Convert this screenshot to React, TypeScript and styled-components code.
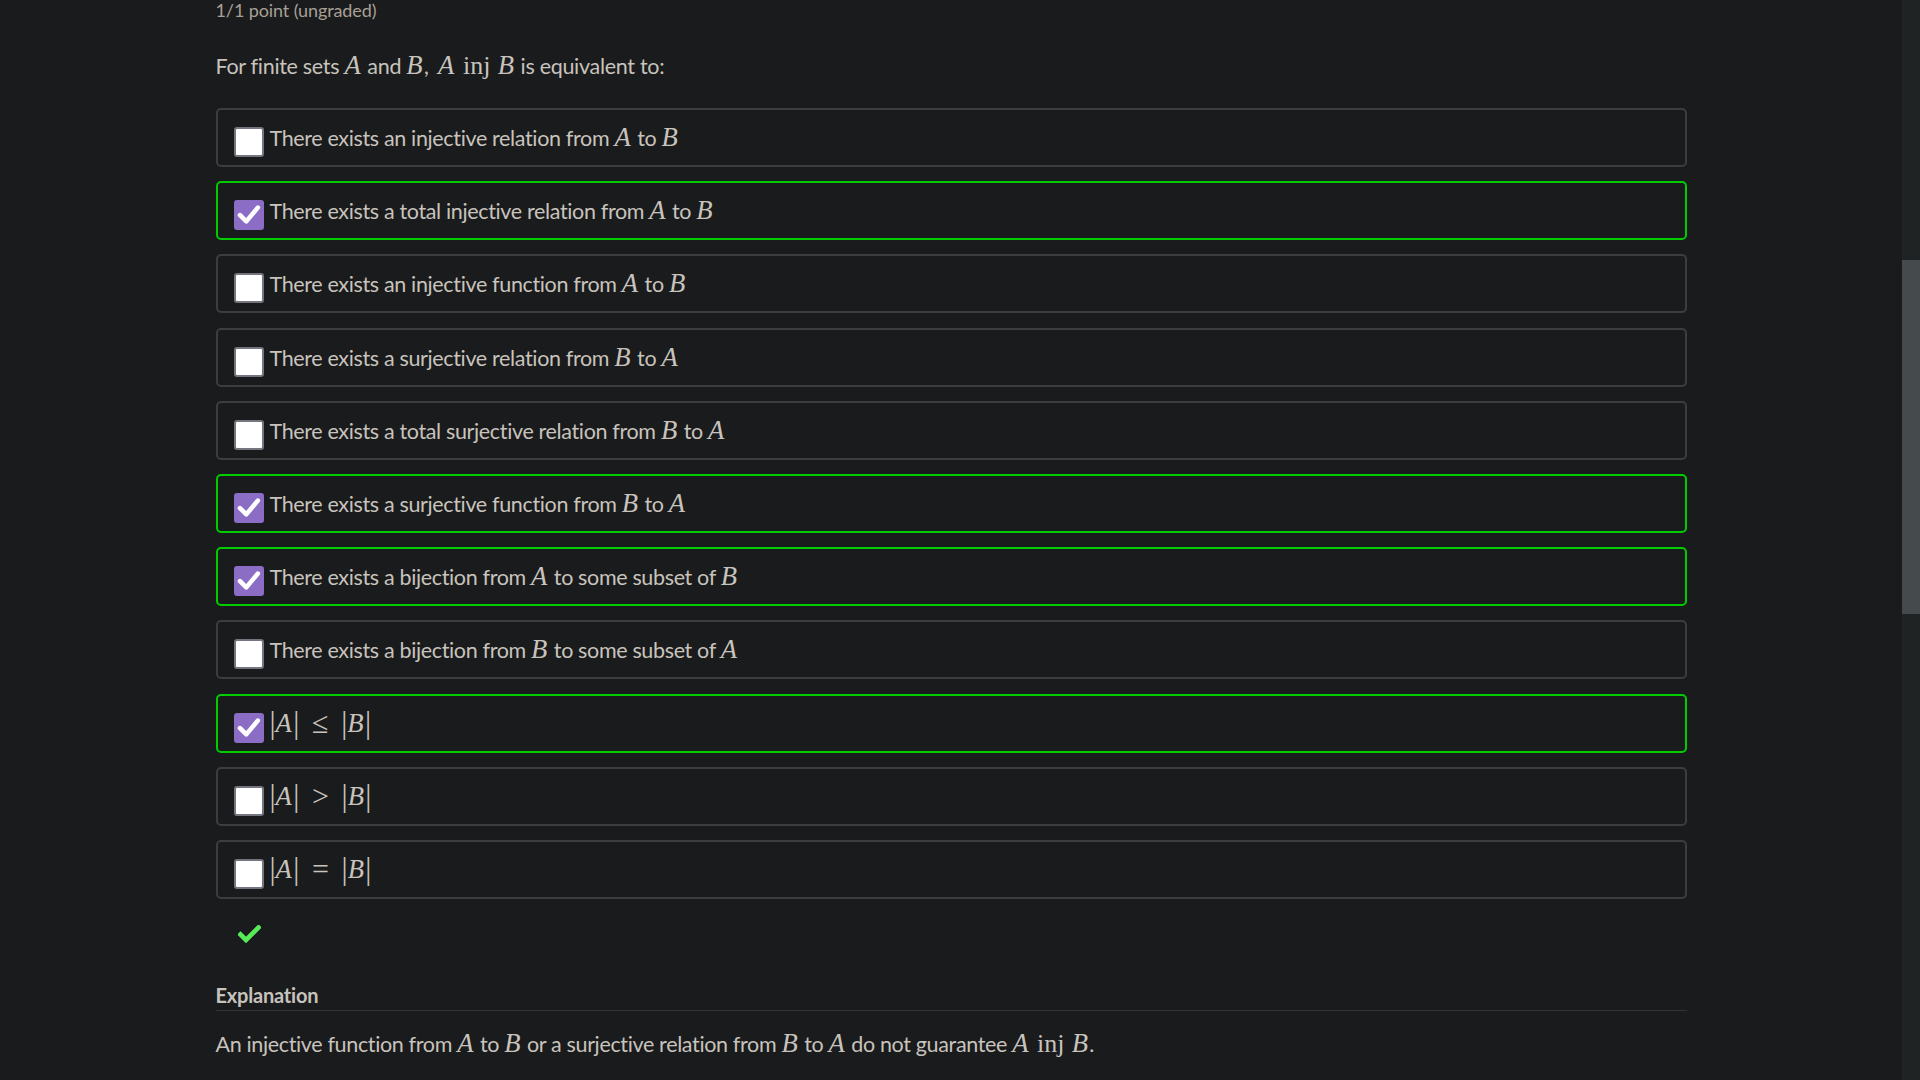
import React from "react";
import styled, { createGlobalStyle } from "styled-components";

const Global = createGlobalStyle`
  html, body {
    margin: 0;
    padding: 0;
    background: #1a1b1d;
  }
  body {
    font-family: Lato, "Liberation Sans", sans-serif;
    color: #c8c3bc;
  }
`;

const Page = styled.div`
  display: flex;
  width: 100vw;
  height: 100vh;
  overflow: hidden;
  background: #1a1b1d;
`;

const Main = styled.main`
  flex: 1;
  display: flex;
  justify-content: center;
`;

const Content = styled.div`
  width: 1471px;
  display: flex;
  flex-direction: column;
`;

const ScrollTrack = styled.div`
  width: 18px;
  background: #202324;
  display: flex;
  flex-direction: column;
`;

const ScrollThumb = styled.div`
  margin-top: 260px;
  height: 354px;
  background: #454a4d;
`;

const Points = styled.div`
  font-size: 18px;
  line-height: 21px;
  letter-spacing: -0.1px;
  color: #a8a095;
`;

const Question = styled.p`
  margin: 29px 0 0;
  font-size: 21.5px;
  line-height: 33px;
  letter-spacing: -0.3px;
`;

const Options = styled.div`
  margin-top: 25px;
  display: flex;
  flex-direction: column;
  gap: 14.2px;
`;

const Option = styled.label<{ $correct: boolean }>`
  box-sizing: border-box;
  height: 59px;
  display: flex;
  align-items: center;
  gap: 6px;
  padding: 0 16px;
  border: 2px solid ${(p) => (p.$correct ? "#00cc00" : "#3a3e41")};
  border-radius: 5px;
  font-size: 21.5px;
  line-height: 26px;
  letter-spacing: -0.35px;
`;

const Box = styled.span<{ $checked: boolean }>`
  box-sizing: border-box;
  flex: none;
  width: 30px;
  height: 30px;
  margin-top: 9px;
  border-radius: 3px;
  border: 2px solid ${(p) => (p.$checked ? "#8c6dc6" : "#75757f")};
  background: ${(p) => (p.$checked ? "#8c6dc6" : "#ffffff")};
  display: flex;
  align-items: center;
  justify-content: center;
`;

const MathLine = styled.span`
  white-space: nowrap;
  display: flex;
  align-items: center;
`;

const Mi = styled.span`
  font-family: "Liberation Serif", "DejaVu Serif", serif;
  font-style: italic;
  font-size: 1.24em;
  line-height: 1;
  letter-spacing: 0;
  padding-right: 0.05em;
`;

const Mr = styled.span<{ $space?: number; $size?: number }>`
  font-family: "Liberation Serif", "DejaVu Serif", serif;
  font-style: normal;
  font-size: ${(p) => p.$size ?? 1.21}em;
  line-height: 1;
  letter-spacing: 0;
  margin: 0 ${(p) => p.$space ?? 0}em;
`;

const Punct = styled.span`
  margin-right: 0.2em;
`;

const Bar = styled.span`
  font-family: "Liberation Serif", "DejaVu Serif", serif;
  font-size: 1.42em;
  line-height: 1;
  letter-spacing: 0;
  color: #c8c3bc;
`;

const ResultRow = styled.div`
  margin-top: 26px;
  padding-left: 22px;
  display: flex;
`;

const Heading = styled.h3`
  margin: 40px 0 0;
  padding-bottom: 3px;
  font-size: 20px;
  line-height: 24px;
  font-weight: 700;
  letter-spacing: -0.2px;
  color: #c8c3bc;
  border-bottom: 1px solid #303436;
`;

const Explanation = styled.p`
  margin: 17px 0 0;
  font-size: 21.5px;
  line-height: 33px;
  letter-spacing: -0.35px;
`;

const CheckMark = () => (
  <svg width="26" height="26" viewBox="0 0 26 26" aria-hidden>
    <polyline
      points="4,13.2 10.3,19.4 21.8,5.6"
      fill="none"
      stroke="#ffffff"
      strokeWidth="4.6"
      strokeLinecap="round"
      strokeLinejoin="round"
    />
  </svg>
);

const GreenCheck = () => (
  <svg width="23" height="18" viewBox="0 0 23 18" aria-hidden>
    <polyline
      points="2.5,9.5 8,15 20.5,2.5"
      fill="none"
      stroke="#57ec57"
      strokeWidth="4.6"
      strokeLinecap="square"
      strokeLinejoin="miter"
    />
  </svg>
);

const A = () => <Mi>A</Mi>;
const B = () => <Mi>B</Mi>;

const Abs = ({ v }: { v: string }) => (
  <>
    <Bar>|</Bar>
    <Mi>{v}</Mi>
    <Bar>|</Bar>
  </>
);

const Rel = ({ sym }: { sym: string }) => (
  <Mr $space={0.42} $size={1.4}>
    {sym}
  </Mr>
);

type Item = { checked: boolean; content: React.ReactNode; math?: boolean };

const items: Item[] = [
  { checked: false, content: <>There exists an injective relation from <A /> to <B /></> },
  { checked: true, content: <>There exists a total injective relation from <A /> to <B /></> },
  { checked: false, content: <>There exists an injective function from <A /> to <B /></> },
  { checked: false, content: <>There exists a surjective relation from <B /> to <A /></> },
  { checked: false, content: <>There exists a total surjective relation from <B /> to <A /></> },
  { checked: true, content: <>There exists a surjective function from <B /> to <A /></> },
  { checked: true, content: <>There exists a bijection from <A /> to some subset of <B /></> },
  { checked: false, content: <>There exists a bijection from <B /> to some subset of <A /></> },
  {
    checked: true,
    math: true,
    content: (
      <>
        <Abs v="A" />
        <Rel sym="≤" />
        <Abs v="B" />
      </>
    ),
  },
  {
    checked: false,
    math: true,
    content: (
      <>
        <Abs v="A" />
        <Rel sym=">" />
        <Abs v="B" />
      </>
    ),
  },
  {
    checked: false,
    math: true,
    content: (
      <>
        <Abs v="A" />
        <Rel sym="=" />
        <Abs v="B" />
      </>
    ),
  },
];

const Inj = () => <Mr $space={0.08}>inj</Mr>;

export default function App() {
  return (
    <>
      <Global />
      <Page>
        <Main>
          <Content>
            <Points>1/1 point (ungraded)</Points>
            <Question>
              For finite sets <A /> and <B />
              <Punct>,</Punct> <A /> <Inj /> <B /> is equivalent to:
            </Question>
            <Options>
              {items.map((it, i) => (
                <Option key={i} $correct={it.checked}>
                  <Box $checked={it.checked}>{it.checked && <CheckMark />}</Box>
                  {it.math ? <MathLine>{it.content}</MathLine> : <span>{it.content}</span>}
                </Option>
              ))}
            </Options>
            <ResultRow>
              <GreenCheck />
            </ResultRow>
            <Heading>Explanation</Heading>
            <Explanation>
              An injective function from <A /> to <B /> or a surjective relation from <B /> to <A /> do not
              guarantee <A /> <Inj /> <B />.
            </Explanation>
          </Content>
        </Main>
        <ScrollTrack>
          <ScrollThumb />
        </ScrollTrack>
      </Page>
    </>
  );
}
